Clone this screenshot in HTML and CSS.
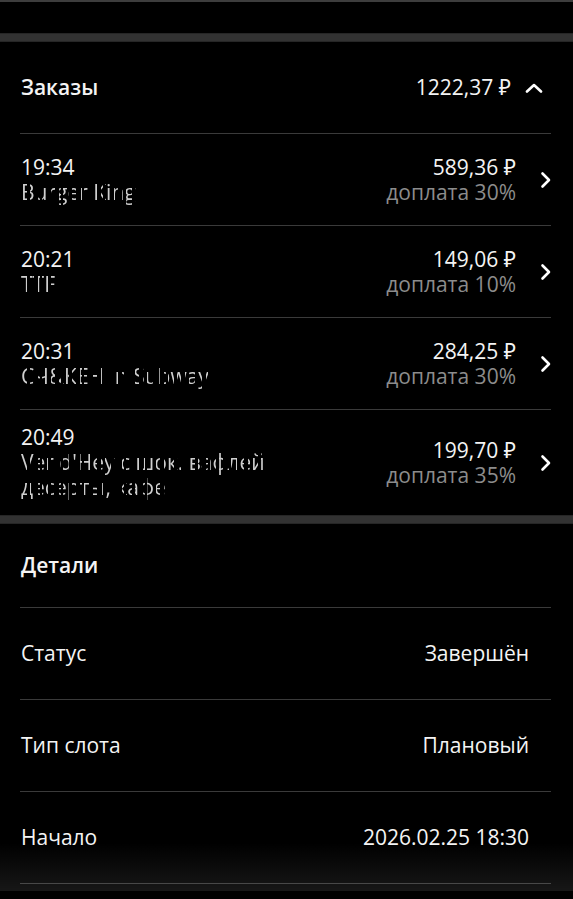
FILE: index.html
```html
<!DOCTYPE html>
<html lang="ru">
<head>
<meta charset="utf-8">
<link rel="stylesheet" href="styles.css">
</head>
<body>
<div class="topline"></div>
<div class="gap"></div>
<div class="band"></div>

<section class="section">
  <div class="head orders-head">
    <span class="title">Заказы</span>
    <span class="total">1222,37 ₽
      <svg class="up" width="18" height="10" viewBox="0 0 18 10"><path d="M2 8.5 L9 2 L16 8.5" fill="none" stroke="#fff" stroke-width="2.6" stroke-linecap="round" stroke-linejoin="round"/></svg>
    </span>
  </div>

  <div class="order">
    <div class="left">
      <div class="time">19:34</div>
      <div class="redacted">Burger King</div>
    </div>
    <div class="right">
      <div class="amount">589,36 ₽</div>
      <div class="extra">доплата 30%</div>
    </div>
    <svg class="chev" width="12" height="18" viewBox="0 0 12 18"><path d="M2.5 2.5 L9 9 L2.5 15.5" fill="none" stroke="#fff" stroke-width="2.6" stroke-linecap="round" stroke-linejoin="round"/></svg>
  </div>

  <div class="order">
    <div class="left">
      <div class="time">20:21</div>
      <div class="redacted">ТТF</div>
    </div>
    <div class="right">
      <div class="amount">149,06 ₽</div>
      <div class="extra">доплата 10%</div>
    </div>
    <svg class="chev" width="12" height="18" viewBox="0 0 12 18"><path d="M2.5 2.5 L9 9 L2.5 15.5" fill="none" stroke="#fff" stroke-width="2.6" stroke-linecap="round" stroke-linejoin="round"/></svg>
  </div>

  <div class="order">
    <div class="left">
      <div class="time">20:31</div>
      <div class="redacted">СЧ&amp;КЕН in Subway</div>
    </div>
    <div class="right">
      <div class="amount">284,25 ₽</div>
      <div class="extra">доплата 30%</div>
    </div>
    <svg class="chev" width="12" height="18" viewBox="0 0 12 18"><path d="M2.5 2.5 L9 9 L2.5 15.5" fill="none" stroke="#fff" stroke-width="2.6" stroke-linecap="round" stroke-linejoin="round"/></svg>
  </div>

  <div class="order last">
    <div class="left">
      <div class="time">20:49</div>
      <div class="redacted">Ver d'Hey с шок. вафлей,<br>десерты, кафе</div>
    </div>
    <div class="right">
      <div class="amount">199,70 ₽</div>
      <div class="extra">доплата 35%</div>
    </div>
    <svg class="chev" width="12" height="18" viewBox="0 0 12 18"><path d="M2.5 2.5 L9 9 L2.5 15.5" fill="none" stroke="#fff" stroke-width="2.6" stroke-linecap="round" stroke-linejoin="round"/></svg>
  </div>
</section>

<div class="band"></div>

<section class="section">
  <div class="head details-head">
    <span class="title">Детали</span>
  </div>
  <div class="detail"><span>Статус</span><span>Завершён</span></div>
  <div class="detail"><span>Тип слота</span><span>Плановый</span></div>
  <div class="detail"><span>Начало</span><span>2026.02.25 18:30</span></div>
</section>

<div class="fade"></div>
<div class="bottom"></div>
</body>
</html>
```

FILE: styles.css
```css
html, body {
  margin: 0;
  padding: 0;
  background: #000;
  overflow: hidden;
}
body {
  font-family: "Open Sans", "Noto Sans", sans-serif;
  font-size: 21px;
  color: #f4f4f4;
  height: 899px;
}
.topline {
  height: 2px;
  background: #3d3d3d;
}
.gap {
  height: 31px;
}
.band {
  height: 9px;
  background: #323232;
  box-shadow: inset 0 1px 0 #262626, inset 0 -1px 0 #262626;
}
.section {
  padding: 0 22px 0 20px;
}
.head {
  display: flex;
  align-items: center;
  justify-content: space-between;
  border-bottom: 1px solid #3a3a3a;
  padding-left: 1px;
  box-sizing: border-box;
}
.orders-head {
  height: 92px;
}
.details-head {
  height: 84px;
}
.title {
  font-weight: 600;
  line-height: 25px;
}
.total {
  display: flex;
  align-items: center;
  gap: 14px;
  line-height: 25px;
  margin-right: 8px;
}
.up {
  display: block;
}
.order {
  display: flex;
  align-items: center;
  min-height: 92px;
  box-sizing: border-box;
  padding: 15px 0 15px 1px;
  border-bottom: 1px solid #3a3a3a;
  line-height: 25px;
}
.order.last {
  border-bottom: none;
}
.left {
  flex: 1;
}
.right {
  text-align: right;
}
.extra {
  color: #8c8c8c;
}
.redacted {
  color: #cfcfcf;
  -webkit-mask-image: repeating-linear-gradient(90deg, #000 0 6px, transparent 6px 9px, #000 9px 13px, transparent 13px 17px, #000 17px 19px, transparent 19px 21px);
  mask-image: repeating-linear-gradient(90deg, #000 0 6px, transparent 6px 9px, #000 9px 13px, transparent 13px 17px, #000 17px 19px, transparent 19px 21px);
}
.chev {
  display: block;
  margin-left: 24px;
  margin-right: -1px;
}
.detail {
  display: flex;
  align-items: center;
  justify-content: space-between;
  height: 92px;
  box-sizing: border-box;
  border-bottom: 1px solid #3a3a3a;
  padding: 0 22px 0 1px;
  line-height: 25px;
}
.fade {
  position: fixed;
  left: 0;
  right: 0;
  bottom: 8px;
  height: 48px;
  background: linear-gradient(to bottom, rgba(255,255,255,0), rgba(255,255,255,0.09));
  pointer-events: none;
}
.bottom {
  position: fixed;
  left: 0;
  right: 0;
  bottom: 0;
  height: 8px;
  background: #000;
}
```
